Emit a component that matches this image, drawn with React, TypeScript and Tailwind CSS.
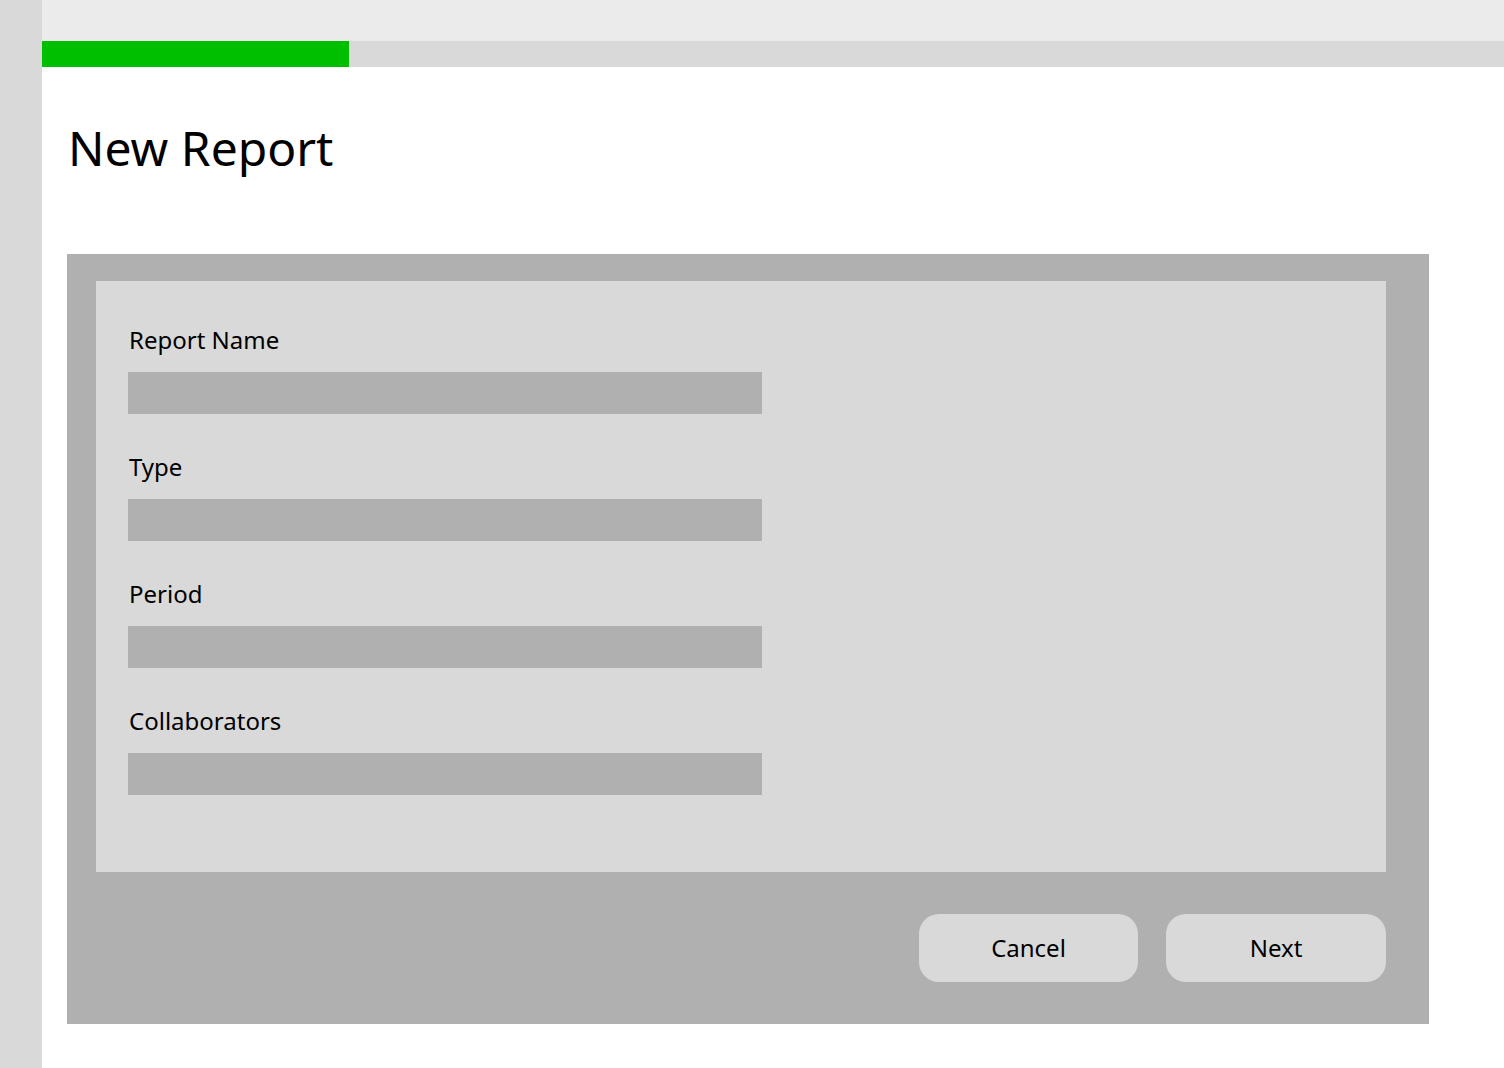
import React from 'react';

const fields = ['Report Name', 'Type', 'Period', 'Collaborators'];

export default function App() {
  return (
    <div className="flex min-h-[1068px] bg-white font-['Inter',sans-serif] text-black">
      <div className="w-[42px] shrink-0 bg-[#d9d9d9]" />
      <div className="flex-1">
        <div className="h-[41px] bg-[#ebebeb]" />
        <div className="h-[26px] bg-[#d9d9d9]">
          <div className="h-full w-[307px] bg-[#00bf00]" />
        </div>
        <div className="pl-[25px]">
          <h1 className="mt-[57px] ml-px text-[48px] leading-[48px] font-normal">New Report</h1>
          <div className="mt-[82px] w-[1362px] bg-[#b0b0b0] px-[29px] pt-[27px] pb-[42px]">
            <div className="mr-[14px] bg-[#d9d9d9] pl-[32px] pt-[47px] pb-[77px]">
              {fields.map((f, i) => (
                <div key={f} className={i > 0 ? 'mt-[41px]' : ''}>
                  <div className="pl-px text-[24px] leading-[24px]">{f}</div>
                  <div className="mt-[20px] h-[42px] w-[634px] bg-[#b0b0b0]" />
                </div>
              ))}
            </div>
            <div className="mt-[42px] mr-[14px] flex justify-end gap-[28px]">
              <button className="h-[68px] w-[219px] rounded-[20px] bg-[#d9d9d9] text-[24px]">Cancel</button>
              <button className="h-[68px] w-[220px] rounded-[20px] bg-[#d9d9d9] text-[24px]">Next</button>
            </div>
          </div>
        </div>
      </div>
    </div>
  );
}
